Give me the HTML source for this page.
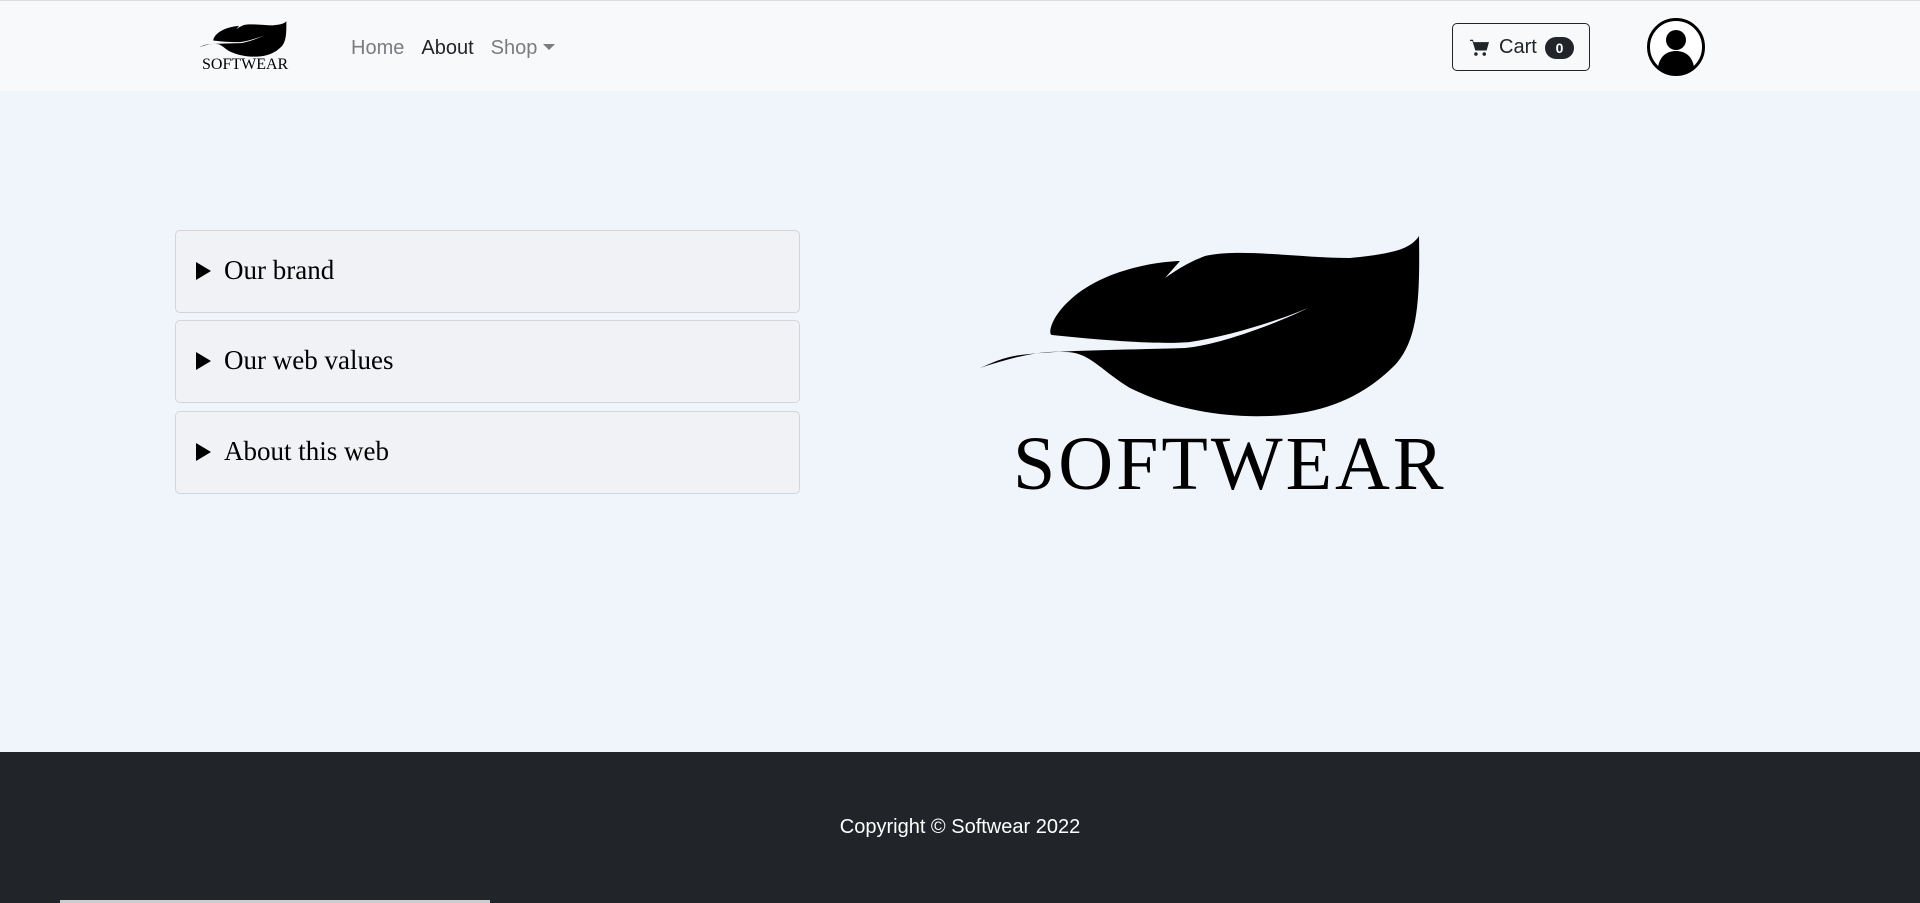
<!DOCTYPE html>
<html><head><meta charset="utf-8"><style>
*{box-sizing:border-box;margin:0;padding:0}
html,body{width:1920px;height:903px;overflow:hidden;background:#f0f4fb;font-family:"Liberation Sans",sans-serif}
.nav{position:absolute;left:0;top:0;width:1920px;height:91px;background:#f8f9fa;border-top:1px solid #dcdde0}
.links{position:absolute;left:351px;top:36px;font-size:20px;color:#7a7d80}
.links span{margin-right:17px}
.cart{position:absolute;left:1452px;top:22px;width:138px;height:48px;border:1px solid #212529;border-radius:5px;font-size:20px;color:#212529}
.badge{position:absolute;left:92px;top:13px;width:29px;height:22px;border-radius:11px;background:#212529;color:#fff;font-size:14px;font-weight:bold;text-align:center;line-height:22px}
.acc{position:absolute;left:175px;width:625px;height:83px;border:1px solid #d3d5d9;border-radius:5px;background:#f0f2f6;font-family:"Liberation Serif",serif;font-size:27px;color:#000}
.acc .t{position:absolute;left:20px;top:31px;width:0;height:0;border-left:15px solid #000;border-top:9px solid transparent;border-bottom:9px solid transparent}
.acc .l{position:absolute;left:48px;top:24px}
footer{position:absolute;left:0;top:752px;width:1920px;height:151px;background:#212529;color:#fff;font-size:20px;text-align:center}
</style></head><body>
<div class="nav">
<svg style="position:absolute;left:195px;top:20px" width="96" height="36" viewBox="979 236 442 182"><path d="M980 368 C1010 358 1040 350 1065 352 C1090 352 1100 370 1130 388 C1170 408 1220 418 1270 416 C1320 414 1360 400 1395 365 C1418 340 1420 300 1419 236 C1410 250 1390 254 1350 258 C1300 258 1240 248 1205 256 C1195 260 1185 264 1165 278 L1180 261 C1150 262 1100 272 1070 300 C1050 318 1048 335 1052 335 C1100 340 1160 345 1190 342 C1230 336 1280 320 1308 308 C1280 322 1220 345 1185 348 C1120 350 1060 350 1020 355 C1000 358 990 364 980 368 Z"/></svg>
<div style="position:absolute;left:202px;top:55px;font-family:'Liberation Serif',serif;font-size:16px;color:#000">SOFTWEAR</div>
<div class="links"><span>Home</span><span style="color:#212529">About</span><span>Shop <span style="display:inline-block;width:0;height:0;border-top:6px solid #7a7d80;border-left:6px solid transparent;border-right:6px solid transparent;vertical-align:4px;margin:0"></span></span></div>
<div class="cart">
<svg style="position:absolute;left:17px;top:14px" width="19" height="19" viewBox="0 0 16 16"><path d="M0 1.5h2.5l.5 2H16l-2 7H4.5L2 2.5H0z M5 12a1.5 1.5 0 1 1 0 3a1.5 1.5 0 0 1 0-3z M12 12a1.5 1.5 0 1 1 0 3a1.5 1.5 0 0 1 0-3z" fill="#212529"/></svg>
<span style="position:absolute;left:46px;top:12px">Cart</span><div class="badge">0</div></div>
<svg style="position:absolute;left:1646px;top:16px" width="60" height="60" viewBox="0 0 60 60"><circle cx="30" cy="30" r="27.5" fill="#fff" stroke="#000" stroke-width="3"/><circle cx="30" cy="23" r="10"/><path d="M12 50 C14 38 22 34 30 34 C38 34 46 38 48 50 C42 56 36 57.5 30 57.5 C24 57.5 18 56 12 50Z"/></svg>
</div>
<div class="acc" style="top:230px"><div class="t"></div><div class="l">Our brand</div></div>
<div class="acc" style="top:320px"><div class="t"></div><div class="l">Our web values</div></div>
<div class="acc" style="top:411px"><div class="t"></div><div class="l">About this web</div></div>
<svg style="position:absolute;left:979px;top:236px" width="442" height="182" viewBox="979 236 442 182"><path d="M980 368 C1010 358 1040 350 1065 352 C1090 352 1100 370 1130 388 C1170 408 1220 418 1270 416 C1320 414 1360 400 1395 365 C1418 340 1420 300 1419 236 C1410 250 1390 254 1350 258 C1300 258 1240 248 1205 256 C1195 260 1185 264 1165 278 L1180 261 C1150 262 1100 272 1070 300 C1050 318 1048 335 1052 335 C1100 340 1160 345 1190 342 C1230 336 1280 320 1308 308 C1280 322 1220 345 1185 348 C1120 350 1060 350 1020 355 C1000 358 990 364 980 368 Z"/></svg>
<div style="position:absolute;left:1013px;top:424px;font-family:'Liberation Serif',serif;font-size:76px;line-height:80px;color:#000;letter-spacing:3px">SOFTWEAR</div>
<footer><div style="position:absolute;width:100%;top:64px">Copyright © Softwear 2022</div>
<div style="position:absolute;left:60px;top:148px;width:430px;height:3px;background:#ccc"></div></footer>
</body></html>
